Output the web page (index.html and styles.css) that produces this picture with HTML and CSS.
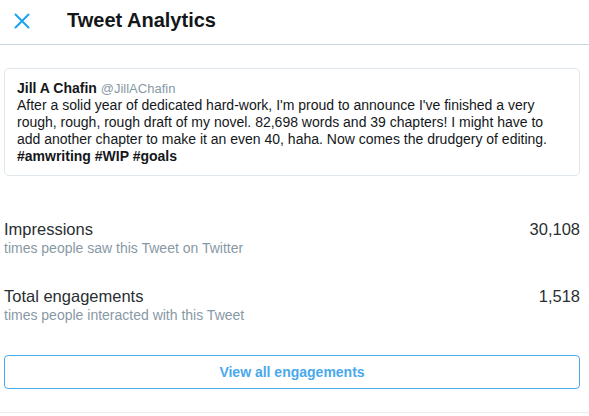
FILE: index.html
```html
<!DOCTYPE html>
<html>
<head>
<meta charset="utf-8">
<link rel="stylesheet" href="styles.css">
</head>
<body>
<header class="topbar">
  <span class="close">
    <svg width="16" height="16" viewBox="0 0 16 16"><path d="M1.5 1.5 L14.5 14.5 M14.5 1.5 L1.5 14.5" stroke="#1da1f2" stroke-width="2" fill="none" stroke-linecap="round"/></svg>
  </span>
  <h1 class="title">Tweet Analytics</h1>
</header>
<main class="content">
  <div class="tweet">
    <div class="author"><span class="name">Jill A Chafin</span> <span class="handle">@JillAChafin</span></div>
    <p class="text">After a solid year of dedicated hard-work, I'm proud to announce I've finished a very rough, rough, rough draft of my novel. 82,698 words and 39 chapters! I might have to add another chapter to make it an even 40, haha. Now comes the drudgery of editing. <b>#amwriting #WIP #goals</b></p>
  </div>
  <div class="metric first">
    <div class="metric-main"><span class="label">Impressions</span><span class="value">30,108</span></div>
    <div class="desc">times people saw this Tweet on Twitter</div>
  </div>
  <div class="metric">
    <div class="metric-main"><span class="label">Total engagements</span><span class="value">1,518</span></div>
    <div class="desc">times people interacted with this Tweet</div>
  </div>
  <button class="btn">View all engagements</button>
</main>
<div class="bottom-rule"></div>
</body>
</html>
```
FILE: styles.css
```css
html, body { margin: 0; padding: 0; background: #fff; }
body { font-family: "Liberation Sans", Arial, sans-serif; color: #14171a; width: 589px; height: 416px; overflow: hidden; }
.topbar { height: 44px; border-bottom: 1px solid #ccd6dd; display: flex; align-items: center; }
.close { width: 16px; height: 16px; margin-left: 14px; margin-top: -2px; display: flex; }
.title { margin: -3px 0 0 37px; font-size: 20px; font-weight: bold; color: #14171a; }
.content { padding: 23px 9px 0 4px; }
.tweet { border: 1px solid #e1e8ed; border-radius: 5px; padding: 11px 12px 10px 12px; }
.author { font-size: 14px; line-height: 16px; }
.name { font-weight: bold; }
.handle { color: #8899a6; font-size: 13px; }
.text { margin: 0; font-size: 14px; line-height: 17px; color: #14171a; }
.metric { margin-top: 29px; }
.metric.first { margin-top: 43px; }
.metric-main { display: flex; justify-content: space-between; font-size: 16.5px; line-height: 20px; color: #292f33; }
.desc { font-size: 14px; line-height: 18px; color: #8899a6; }
.btn { display: block; width: 100%; margin-top: 31px; height: 34px; padding: 0; border: 1px solid #4aa8ec; border-radius: 4px; background: #fff; color: #4aa8ec; font-family: "Liberation Sans", Arial, sans-serif; font-weight: bold; font-size: 14px; }
.bottom-rule { margin-top: 23px; border-top: 1px solid #e6ecf0; }
```
